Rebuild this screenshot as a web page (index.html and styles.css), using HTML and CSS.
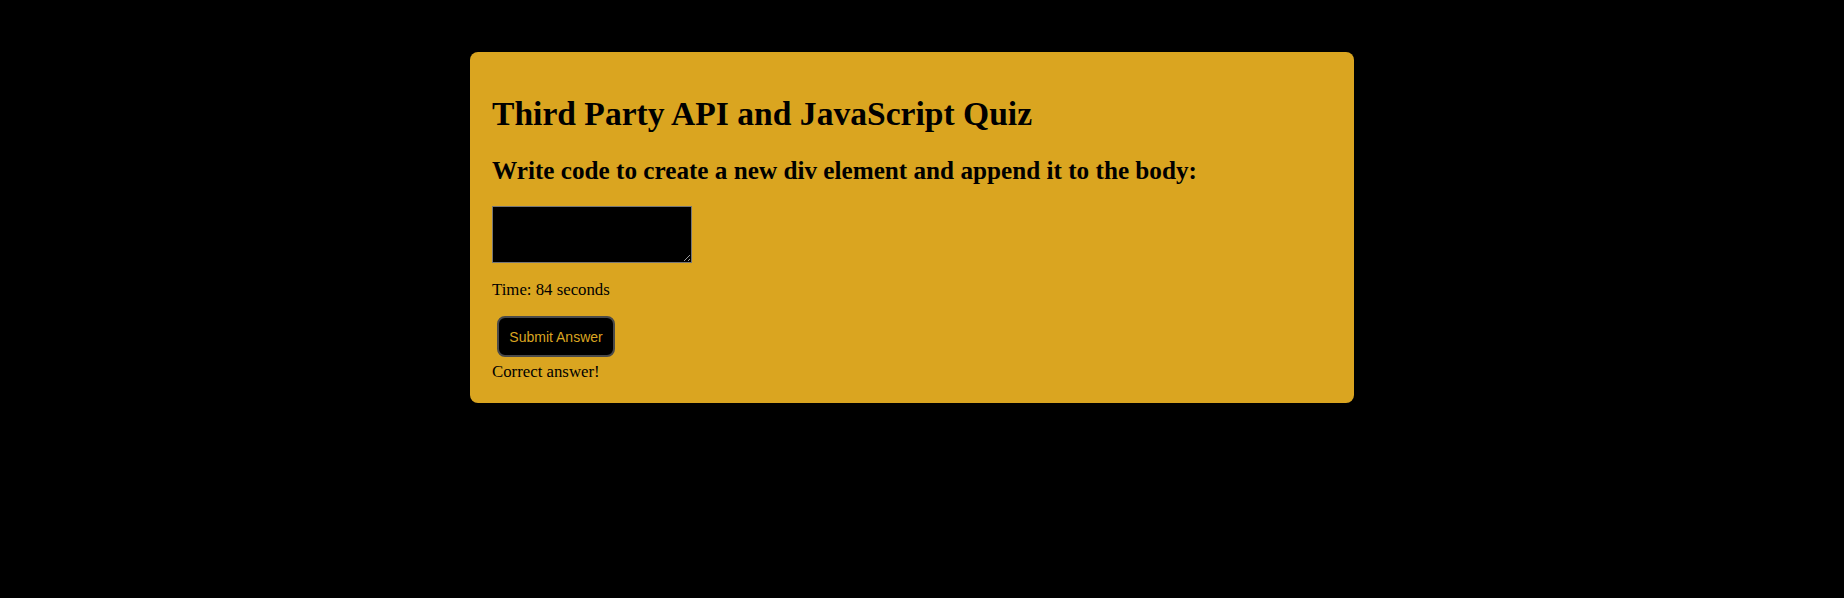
FILE: index.html
```html
<!DOCTYPE html>
<html lang="en">
<head>
<meta charset="utf-8">
<title>Third Party API and JavaScript Quiz</title>
<link rel="stylesheet" href="styles.css">
</head>
<body>
<div class="page">
  <div class="quiz">
    <h1 class="title">Third Party API and JavaScript Quiz</h1>
    <h2 class="question">Write code to create a new div element and append it to the body:</h2>
    <textarea class="answer"></textarea>
    <p class="timer">Time: 84 seconds</p>
    <button class="submit">Submit Answer</button>
    <div class="feedback">Correct answer!</div>
  </div>
</div>
</body>
</html>
```

FILE: styles.css
```css
html, body {
  margin: 0;
  padding: 0;
  background: #000;
  font-family: "Liberation Serif", "Times New Roman", serif;
  color: #000;
}
.page {
  display: flex;
  justify-content: center;
  padding: 52px 20px 0 0;
}
.quiz {
  width: 884px;
  box-sizing: border-box;
  background: #daa520;
  border-radius: 8px;
  padding: 20px 21px 22px 22px;
}
.title {
  font-size: 33.6px;
  line-height: 37px;
  font-weight: bold;
  margin: 23px 0 0;
}
.question {
  font-size: 25.2px;
  line-height: 28px;
  font-weight: bold;
  margin: 25px 0 0;
}
.answer {
  display: block;
  box-sizing: border-box;
  width: 200px;
  height: 57px;
  margin: 21px 0 0;
  background: #000;
  color: #daa520;
  border: 1px solid #767676;
  padding: 2px;
}
.timer {
  font-size: 16.8px;
  line-height: 18px;
  margin: 18px 0 0;
}
.submit {
  display: block;
  box-sizing: border-box;
  width: 118px;
  height: 41px;
  margin: 17px 0 0 5px;
  padding: 0;
  background: #000;
  color: #daa520;
  border: 2px solid #4a4a4a;
  border-radius: 8px;
  font-family: "Liberation Sans", Arial, sans-serif;
  font-size: 14px;
}
.feedback {
  font-size: 16.8px;
  line-height: 18px;
  margin-top: 6px;
}
```
